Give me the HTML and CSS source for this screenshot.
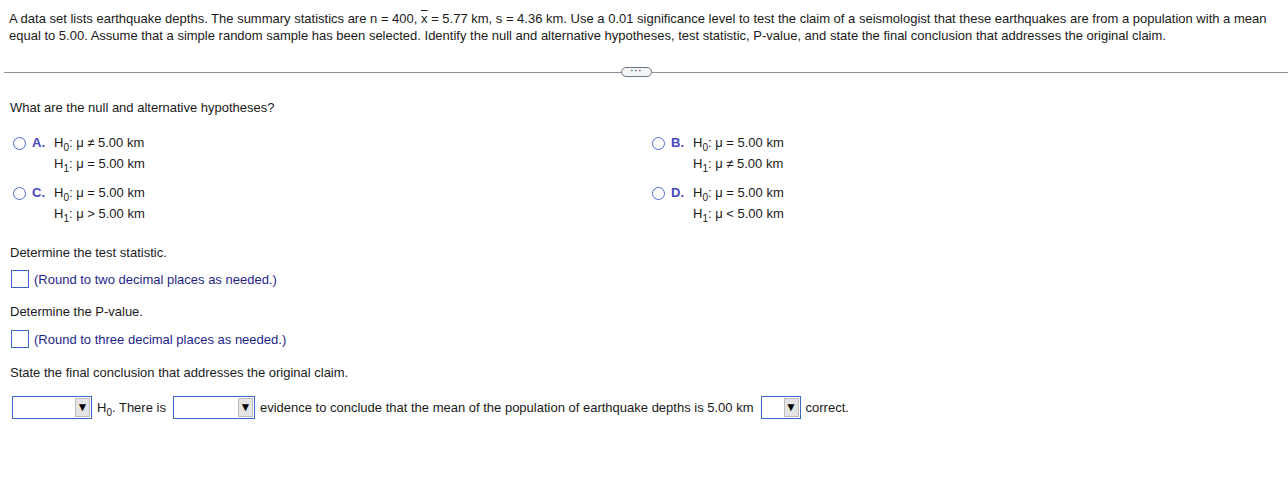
FILE: index.html
```html
<!DOCTYPE html>
<html>
<head>
<meta charset="utf-8">
<link rel="stylesheet" href="styles.css">
</head>
<body>
<div class="question">A data set lists earthquake depths. The summary statistics are n = 400, <span class="xbar">x</span> = 5.77 km, s = 4.36 km. Use a 0.01 significance level to test the claim of a seismologist that these earthquakes are from a population with a mean equal to 5.00. Assume that a simple random sample has been selected. Identify the null and alternative hypotheses, test statistic, P-value, and state the final conclusion that addresses the original claim.</div>
<div class="divider"><span class="line left"></span><span class="pill">&middot;&middot;&middot;</span><span class="line"></span></div>
<div class="body">
  <div class="prompt">What are the null and alternative hypotheses?</div>
  <div class="options">
    <div class="opt"><span class="radio"></span><span class="letter">A.</span><div class="hyp"><div>H<sub>0</sub>: μ ≠ 5.00 km</div><div>H<sub>1</sub>: μ = 5.00 km</div></div></div>
    <div class="opt"><span class="radio"></span><span class="letter">B.</span><div class="hyp"><div>H<sub>0</sub>: μ = 5.00 km</div><div>H<sub>1</sub>: μ ≠ 5.00 km</div></div></div>
    <div class="opt"><span class="radio"></span><span class="letter">C.</span><div class="hyp"><div>H<sub>0</sub>: μ = 5.00 km</div><div>H<sub>1</sub>: μ &gt; 5.00 km</div></div></div>
    <div class="opt"><span class="radio"></span><span class="letter">D.</span><div class="hyp"><div>H<sub>0</sub>: μ = 5.00 km</div><div>H<sub>1</sub>: μ &lt; 5.00 km</div></div></div>
  </div>
  <div class="prompt p2">Determine the test statistic.</div>
  <div class="answer"><span class="box"></span><span class="instr">(Round to two decimal places as needed.)</span></div>
  <div class="prompt p3">Determine the P-value.</div>
  <div class="answer a2"><span class="box"></span><span class="instr">(Round to three decimal places as needed.)</span></div>
  <div class="prompt p4">State the final conclusion that addresses the original claim.</div>
  <div class="conclusion">
    <span class="select w80"><span class="arrow">▼</span></span>
    <span class="txt">H<sub>0</sub>. There is</span>
    <span class="select w82"><span class="arrow">▼</span></span>
    <span class="txt">evidence to conclude that the mean of the population of earthquake depths is 5.00 km</span>
    <span class="select w40"><span class="arrow">▼</span></span>
    <span class="txt">correct.</span>
  </div>
</div>
</body>
</html>
```
FILE: styles.css
```css
html, body { margin: 0; padding: 0; background: #fff; }
body { font-family: "Liberation Sans", Arial, sans-serif; font-size: 13px; color: #1a1a1a; }
.question { padding: 10px 20px 0 9px; line-height: 17px; }
.xbar { text-decoration: overline; }
.divider { display: flex; align-items: center; margin: 23px 0 0 4px; height: 10px; }
.divider .line { flex: 1; height: 1px; background: #8a929c; }
.divider .line.left { flex: 0 0 617px; }
.pill { width: 29px; height: 8px; border: 1px solid #6b7684; border-radius: 5px; background: #f2f4f6; font-size: 9px; line-height: 6px; text-align: center; color: #4a5563; letter-spacing: 1px; font-weight: bold; }
.body { padding: 0 0 0 10px; }
.prompt { margin-top: 23px; line-height: 16px; }
.options { display: grid; grid-template-columns: 639px auto; row-gap: 9px; margin-top: 17px; }
.opt { display: flex; align-items: flex-start; line-height: 20px; }
.radio { width: 11px; height: 11px; border: 1px solid #4d6ad0; border-radius: 50%; margin: 4px 0 0 3px; }
.letter { color: #4848c0; font-weight: bold; margin-left: 6px; width: 22px; }
.hyp div { height: 20.5px; }
sub { font-size: 10px; vertical-align: -4px; line-height: 0; }
.p2 { margin-top: 21px; }
.answer { display: flex; align-items: center; margin-top: 9px; height: 18px; }
.a2 { margin-top: 10px; }
.box { width: 16px; height: 16px; border: 1px solid #3c64c8; margin-left: 1px; }
.instr { color: #1f1f8a; margin-left: 5px; }
.p3 { margin-top: 16px; }
.p4 { margin-top: 17px; }
.conclusion { display: flex; align-items: center; margin-top: 14px; height: 24px; }
.select { position: relative; display: inline-block; height: 23px; border: 1px solid #3b68c9; background: #fff; margin-left: 2px; box-sizing: border-box; }
.w80 { width: 80px; }
.w82 { width: 82px; }
.w40 { width: 40px; }
.arrow { position: absolute; right: 1px; top: 1px; width: 15px; height: 19px; background: #e4e4e4; border: 1px solid #bdbdbd; box-sizing: border-box; font-size: 12px; line-height: 17px; text-align: center; color: #000; }
.txt { margin: 0 5px; white-space: nowrap; }
```
